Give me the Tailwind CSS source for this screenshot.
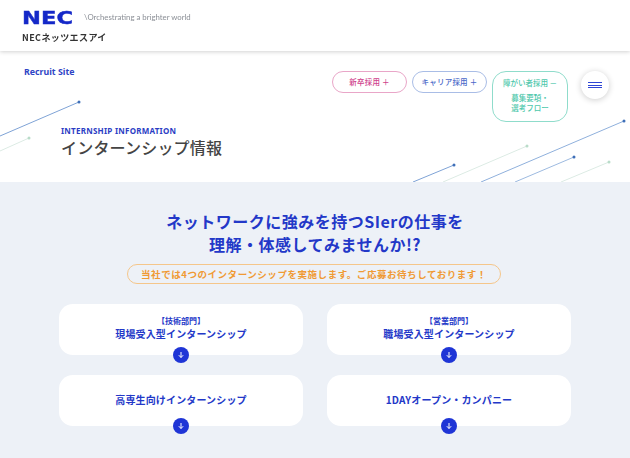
<!DOCTYPE html>
<html lang="ja">
  <head>
    <meta charset="UTF-8" />
    <title>インターンシップ情報</title>
    <script src="https://cdn.jsdelivr.net/npm/@tailwindcss/browser@4"></script>
  </head>
  <body class="bg-white font-['Noto_Sans_CJK_JP','Noto_Sans',sans-serif] text-[#333] overflow-hidden blur-[0.35px]">
    <!-- Header -->
    <header class="relative z-10 h-[51px] bg-white shadow-[0_1px_4px_rgba(0,0,0,0.18)] pl-[22px] pt-[9px]">
      <div class="flex items-center h-[17px]">
        <svg width="52" height="17" viewBox="0 0 52 17" class="block overflow-visible">
          <text x="0" y="15" font-family="DejaVu Sans" font-weight="700" font-size="18" fill="#1428c8" stroke="#1428c8" stroke-width="0.4" textLength="51" lengthAdjust="spacingAndGlyphs">NEC</text>
        </svg>
        <span class="ml-[10px] text-[7.8px] text-[#8b8f96] font-['Lato',sans-serif]">\Orchestrating a brighter world</span>
      </div>
      <div class="mt-[5px] text-[9px] leading-[14px] font-bold tracking-[0.4px] text-[#333]">NECネッツエスアイ</div>
    </header>

    <!-- Hero -->
    <section class="relative h-[131px] bg-white">
      <svg class="absolute left-0 top-0" width="630" height="131" viewBox="0 51 630 131" fill="none">
        <g stroke-width="1">
          <path d="M0 136L79 102" stroke="#7fa3d6" />
          <circle cx="79" cy="102" r="1.5" fill="#3f6fb8" />
          <path d="M0 151L29 138" stroke="#dcebe4" />
          <circle cx="29" cy="138" r="1.5" fill="#b9dcc9" />
          <path d="M413 182L454 165" stroke="#7fa3d6" />
          <circle cx="454" cy="165" r="1.5" fill="#3f6fb8" />
          <path d="M443 182L527 146" stroke="#dcebe4" />
          <circle cx="527" cy="146" r="1.5" fill="#b9dcc9" />
          <path d="M481 182L624 121" stroke="#8fb0dc" />
          <circle cx="624" cy="121" r="1.5" fill="#3f6fb8" />
          <path d="M515 182L574 157" stroke="#9dbae0" />
          <circle cx="574" cy="157" r="1.5" fill="#3f6fb8" />
          <path d="M561 182L609 162" stroke="#dcebe4" />
          <circle cx="609" cy="162" r="1.5" fill="#b9dcc9" />
        </g>
      </svg>
      <div class="relative flex justify-between pl-[24px] pr-[21px] pt-[20px]">
        <div class="-mt-[6px] text-[8.8px] leading-[15px] font-bold text-[#2f45c5] font-['Noto_Sans',sans-serif]">Recruit Site</div>
        <div class="flex items-start">
          <a class="flex items-center justify-center w-[75px] h-[22px] rounded-full border border-[#e9a6c8] text-[7.5px] font-medium text-[#cf3f8c] tracking-[0.2px]">新卒採用 ＋</a>
          <a class="ml-[5px] flex items-center justify-center w-[75px] h-[22px] rounded-full border border-[#a9bde6] text-[7.5px] font-medium text-[#4a68c8] tracking-[0.2px]">キャリア採用 ＋</a>
          <div class="ml-[5px] w-[76px] h-[51px] rounded-[14px] border border-[#8fdccb] text-center text-[7.5px] font-medium text-[#4fc8ac]">
            <div class="mt-[5px] leading-[12px]">障がい者採用 －</div>
            <div class="mt-[4px] leading-[10px]">募集要項・<br />選考フロー</div>
          </div>
          <button class="ml-[13px] flex flex-col items-center justify-center gap-[1.5px] w-[28px] h-[28px] rounded-full bg-white shadow-[0_1px_6px_rgba(0,0,0,0.2)]">
            <span class="block w-[14px] h-px bg-[#2f45d5]"></span>
            <span class="block w-[14px] h-px bg-[#2f45d5]"></span>
            <span class="block w-[14px] h-px bg-[#2f45d5]"></span>
          </button>
        </div>
      </div>
      <div class="absolute left-[61px] top-[73px]">
        <div class="text-[8px] leading-[13px] font-bold tracking-[0.25px] text-[#2b3ec4] font-['Noto_Sans',sans-serif]">INTERNSHIP INFORMATION</div>
        <h1 class="-mt-[2px] text-[16px] leading-[24px] font-medium tracking-[0.2px] text-[#444]">インターンシップ情報</h1>
      </div>
    </section>

    <!-- Main -->
    <main class="h-[276px] bg-[#edf1f7] pt-[28px]">
      <h2 class="text-center text-[16px] leading-[23px] font-bold tracking-[0.5px] text-[#2338c8]">ネットワークに強みを持つSIerの仕事を<br />理解・体感してみませんか!?</h2>
      <div class="mt-[8px] ml-[127px] flex items-center justify-center w-[374px] h-[20px] rounded-full border border-[#f5c68a] text-[9.5px] font-bold tracking-[0.55px] text-[#f09a34]">当社では4つのインターンシップを実施します。ご応募お待ちしております！</div>

      <div class="mt-[20px] mx-[59px] grid grid-cols-2 gap-x-[24px] gap-y-[20px] w-[512px]">
        <a class="relative flex flex-col items-center justify-center h-[51px] pb-[3px] rounded-[14px] bg-white text-[#2338c8] font-bold">
          <span class="text-[8px] leading-[12px]">【技術部門】</span>
          <span class="text-[10px] leading-[14px] tracking-[0.15px]">現場受入型インターンシップ</span>
          <span class="absolute left-1/2 -bottom-[8px] -ml-[8px] flex items-center justify-center w-[16px] h-[16px] rounded-full bg-[#1f35d6]">
            <svg width="8" height="8" viewBox="0 0 8 8" fill="none" stroke="#fff" stroke-width="1"><path d="M4 1v5.5M1.8 4.2L4 6.5l2.2-2.3" /></svg>
          </span>
        </a>
        <a class="relative flex flex-col items-center justify-center h-[51px] pb-[3px] rounded-[14px] bg-white text-[#2338c8] font-bold">
          <span class="text-[8px] leading-[12px]">【営業部門】</span>
          <span class="text-[10px] leading-[14px] tracking-[0.15px]">職場受入型インターンシップ</span>
          <span class="absolute left-1/2 -bottom-[8px] -ml-[8px] flex items-center justify-center w-[16px] h-[16px] rounded-full bg-[#1f35d6]">
            <svg width="8" height="8" viewBox="0 0 8 8" fill="none" stroke="#fff" stroke-width="1"><path d="M4 1v5.5M1.8 4.2L4 6.5l2.2-2.3" /></svg>
          </span>
        </a>
        <a class="relative flex items-center justify-center h-[51px] pb-[2px] rounded-[14px] bg-white text-[#2338c8] font-bold">
          <span class="text-[10px] leading-[14px] tracking-[0.15px]">高専生向けインターンシップ</span>
          <span class="absolute left-1/2 -bottom-[8px] -ml-[8px] flex items-center justify-center w-[16px] h-[16px] rounded-full bg-[#1f35d6]">
            <svg width="8" height="8" viewBox="0 0 8 8" fill="none" stroke="#fff" stroke-width="1"><path d="M4 1v5.5M1.8 4.2L4 6.5l2.2-2.3" /></svg>
          </span>
        </a>
        <a class="relative flex items-center justify-center h-[51px] pb-[2px] rounded-[14px] bg-white text-[#2338c8] font-bold">
          <span class="text-[10px] leading-[14px] tracking-[0.15px]">1DAYオープン・カンパニー</span>
          <span class="absolute left-1/2 -bottom-[8px] -ml-[8px] flex items-center justify-center w-[16px] h-[16px] rounded-full bg-[#1f35d6]">
            <svg width="8" height="8" viewBox="0 0 8 8" fill="none" stroke="#fff" stroke-width="1"><path d="M4 1v5.5M1.8 4.2L4 6.5l2.2-2.3" /></svg>
          </span>
        </a>
      </div>
    </main>
  </body>
</html>
